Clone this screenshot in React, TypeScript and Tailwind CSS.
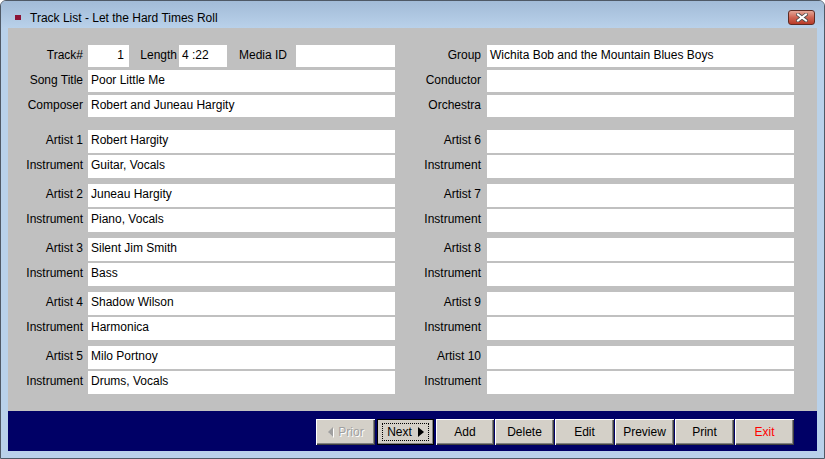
import type { ReactNode } from 'react'

const artists = [
  { n: 1, name: 'Robert Hargity', inst: 'Guitar, Vocals' },
  { n: 2, name: 'Juneau Hargity', inst: 'Piano, Vocals' },
  { n: 3, name: 'Silent Jim Smith', inst: 'Bass' },
  { n: 4, name: 'Shadow Wilson', inst: 'Harmonica' },
  { n: 5, name: 'Milo Portnoy', inst: 'Drums, Vocals' },
]

const buttons = ['Delete', 'Edit', 'Preview', 'Print']

function Box({ children, className = '' }: { children?: ReactNode; className?: string }) {
  return (
    <div className={`bg-white pl-[3px] pt-[3px] leading-[15px] whitespace-nowrap overflow-hidden ${className}`}>
      {children}
    </div>
  )
}

function Row({
  left, leftVal, right, rightVal, h,
}: { left: string; leftVal?: string; right: string; rightVal?: string; h: string }) {
  return (
    <div className={`flex ${h}`}>
      <div className="w-[75px] text-right pt-[3px] leading-[15px]">{left}</div>
      <Box className={`ml-[5px] w-[307px] ${h}`}>{leftVal}</Box>
      <div className="w-[86px] text-right pt-[3px] leading-[15px]">{right}</div>
      <Box className={`ml-[6px] w-[307px] ${h}`}>{rightVal}</Box>
    </div>
  )
}

function WinButton({ children, className = '', w = 'w-[59px]' }: { children: ReactNode; className?: string; w?: string }) {
  return (
    <button
      className={`${w} h-[26px] bg-[#d4d0c8] flex items-center justify-center text-[12px] shadow-[inset_1px_1px_0_#ffffff,inset_-1px_-1px_0_#404040,inset_-2px_-2px_0_#808080] ${className}`}
    >
      {children}
    </button>
  )
}

export default function App() {
  return (
    <div className="w-[825px] h-[459px] bg-[#b9d1ea] border border-[#4f5966] rounded-t-[6px] flex flex-col overflow-hidden font-['Liberation_Sans',Arial,sans-serif] text-[12px] text-black">
      {/* title bar */}
      <div className="h-[27px] shrink-0 flex items-center pt-[6px] pl-[14px] pr-[9px] bg-gradient-to-b from-[#a2bbd7] to-[#b9d1ea]">
        <div className="w-[6px] h-[5px] bg-[#8c1436]" />
        <div className="ml-[9px] text-[12px] text-black">Track List - Let the Hard Times Roll</div>
        <div className="ml-auto w-[27px] h-[15px] rounded-[3px] border border-[#5e2a22] bg-gradient-to-b from-[#e3a697] via-[#cf6453] to-[#b83a27] flex items-center justify-center">
          <svg width="12" height="9" viewBox="0 0 12 9">
            <path d="M2 1.5L10 7.5M10 1.5L2 7.5" stroke="#4a4a4a" strokeWidth="3.6" strokeLinecap="square" />
            <path d="M2 1.5L10 7.5M10 1.5L2 7.5" stroke="#ffffff" strokeWidth="2" strokeLinecap="square" />
          </svg>
        </div>
      </div>

      {/* form area */}
      <div className="mx-[7px] h-[383px] shrink-0 bg-[#c0c0c0] pt-[17px] flex flex-col">
        <div className="flex flex-col gap-[3px]">
          <div className="flex h-[22px]">
            <div className="w-[75px] text-right pt-[3px] leading-[15px]">Track#</div>
            <Box className="ml-[5px] w-[41px] h-[22px] text-right pr-[5px]">1</Box>
            <div className="w-[48px] text-right pt-[3px] leading-[15px]">Length</div>
            <Box className="ml-[2px] w-[48px] h-[22px] pl-[2px]">4 :22</Box>
            <div className="w-[69px] pl-[12px] pt-[3px] leading-[15px]">Media ID</div>
            <Box className="w-[99px] h-[22px]" />
            <div className="w-[86px] text-right pt-[3px] leading-[15px]">Group</div>
            <Box className="ml-[6px] w-[307px] h-[22px]">Wichita Bob and the Mountain Blues Boys</Box>
          </div>
          <Row h="h-[22px]" left="Song Title" leftVal="Poor Little Me" right="Conductor" />
          <Row h="h-[22px]" left="Composer" leftVal="Robert and Juneau Hargity" right="Orchestra" />
        </div>

        <div className="mt-[13px] flex flex-col gap-[6px]">
          {artists.map(a => (
            <div key={a.n} className="flex flex-col gap-[2px]">
              <Row h="h-[23px]" left={`Artist ${a.n}`} leftVal={a.name} right={`Artist ${a.n + 5}`} />
              <Row h="h-[23px]" left="Instrument" leftVal={a.inst} right="Instrument" />
            </div>
          ))}
        </div>
      </div>

      {/* button bar */}
      <div className="mx-[7px] h-[40px] shrink-0 bg-[#000066] flex justify-end items-start pt-[8px] pr-[23px] gap-[1px]">
        <WinButton className="text-[#a0a0a0] [text-shadow:1px_1px_0_#ffffff]">
          <svg width="7" height="11" viewBox="0 0 7 11" className="mr-[4px]">
            <path d="M7 11L2 6L7 1Z" fill="#ffffff" />
            <path d="M6 10L1 5L6 0Z" fill="#a0a0a0" />
          </svg>
          Prior
        </WinButton>
        <WinButton w="w-[57px]" className="mx-[1px] outline outline-1 outline-black -outline-offset-1">
          <span className="border border-dotted border-black px-[4px] h-[18px] flex items-center">
            Next
            <svg width="6" height="10" viewBox="0 0 6 10" className="ml-[6px]">
              <path d="M0 0L6 5L0 10Z" fill="#000000" />
            </svg>
          </span>
        </WinButton>
        <WinButton w="w-[58px]">Add</WinButton>
        {buttons.map(b => (
          <WinButton key={b}>{b}</WinButton>
        ))}
        <WinButton className="text-[#ff0000]">Exit</WinButton>
      </div>
    </div>
  )
}
